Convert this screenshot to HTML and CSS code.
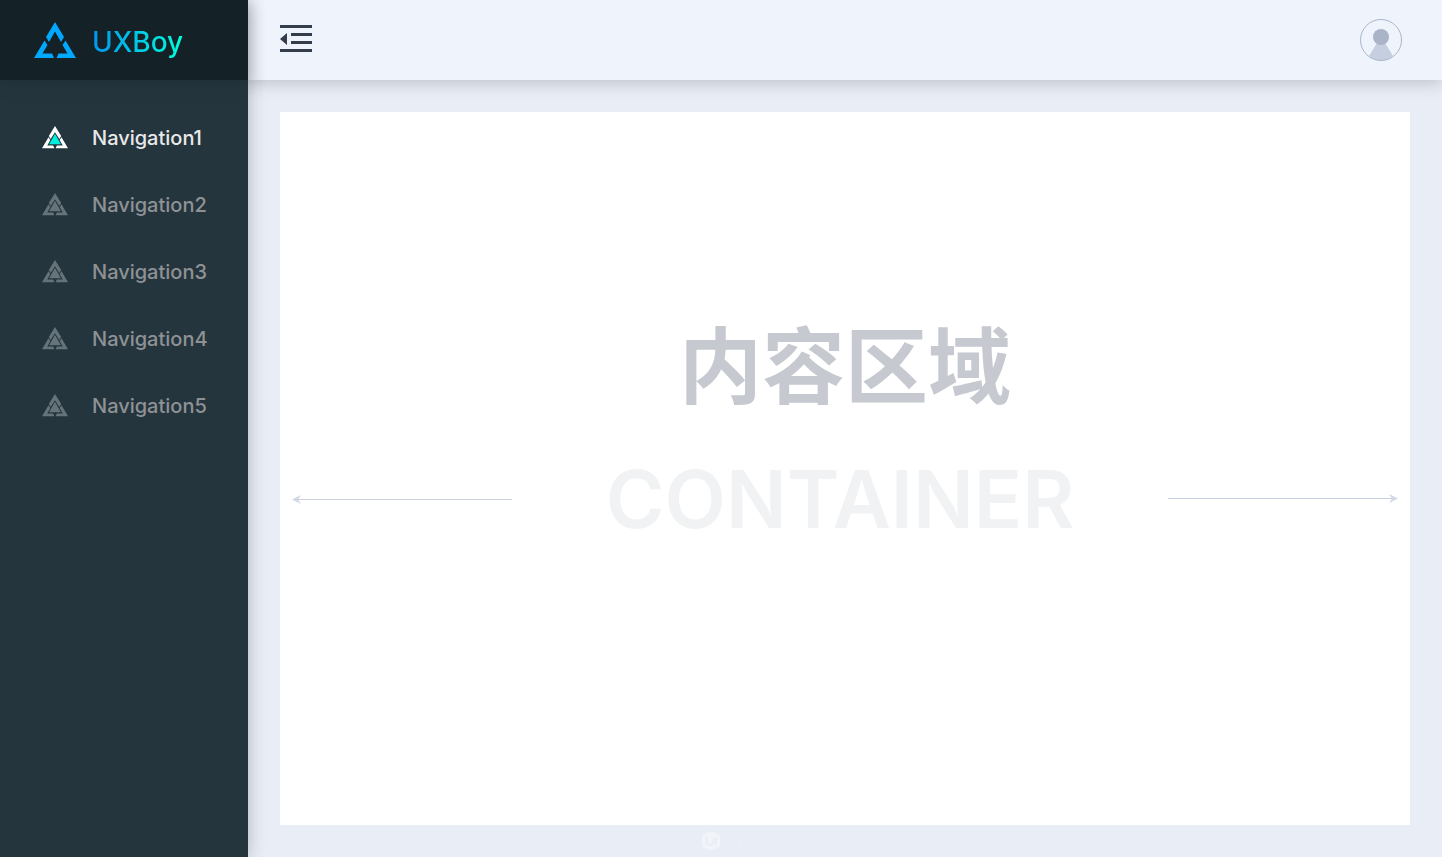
FILE: index.html
```html
<!DOCTYPE html>
<html lang="zh-CN">
<head>
    <meta charset="UTF-8">
    <meta name="viewport" content="width=device-width, initial-scale=1.0">
    <title>UXBoy</title>
    <link rel="stylesheet" href="styles.css">
</head>
<body>
    <svg class="symbols" aria-hidden="true">
        <symbol id="tri" viewBox="0 0 42 36">
            <path d="M21 0 30 15 27 20 21 9.500 15 20 12 15Z"/>
            <path d="M10.500 18.500 13.500 23 8.500 31.500H18L20 36H0Z"/>
            <path d="M31.500 18.500 28.500 23 33.500 31.500H24.500L22.500 36H42Z"/>
        </symbol>
        <symbol id="tri-nav" viewBox="0 0 42 36" preserveAspectRatio="xMidYMin meet">
            <path d="M21 0 31 16 28 21 21 10 14 21 11 16Z"/>
            <path d="M10.500 18 13.500 22.500 8.500 31.500H18L20 36H0Z"/>
            <path d="M31.500 18 28.500 22.500 33.500 31.500H24L22 36H42Z"/>
            <path class="core" d="M21 12.500 30.500 29.500H11.500Z"/>
        </symbol>
    </svg>

    <aside class="sidebar">
        <a href="#" class="brand">
            <svg class="brand-logo"><use href="#tri"/></svg>
            <span class="brand-name">UXBoy</span>
        </a>
        <nav class="nav">
            <a href="#" class="nav-item active"><svg class="nav-icon"><use href="#tri-nav"/></svg>Navigation1</a>
            <a href="#" class="nav-item"><svg class="nav-icon"><use href="#tri-nav"/></svg>Navigation2</a>
            <a href="#" class="nav-item"><svg class="nav-icon"><use href="#tri-nav"/></svg>Navigation3</a>
            <a href="#" class="nav-item"><svg class="nav-icon"><use href="#tri-nav"/></svg>Navigation4</a>
            <a href="#" class="nav-item"><svg class="nav-icon"><use href="#tri-nav"/></svg>Navigation5</a>
        </nav>
    </aside>

    <div class="page">
        <header class="topbar">
            <button type="button" class="icon-btn" aria-label="Menu">
                <svg width="32" height="32" viewBox="0 0 32 32" fill="#333d4b">
                    <path d="M0 1H32V4H0ZM11 9H32V12H11ZM11 17H32V20H11ZM0 25H32V28H0ZM7 9V21L0 15Z"/>
                </svg>
            </button>
            <button type="button" class="icon-btn" aria-label="User">
                <svg width="42" height="42" viewBox="0 0 42 42">
                    <path d="M17 24H25L33 37Q27 41.500 21 41.500T9 37Z" fill="#c6cfdf"/>
                    <circle cx="21" cy="18" r="8" fill="#a9b4c8"/>
                    <circle cx="21" cy="21" r="20.500" fill="none" stroke="#a9b7cb"/>
                </svg>
            </button>
        </header>

        <main class="content">
            <h1 class="title">内容区域</h1>
            <div class="row">
                <svg class="arrow" width="220" height="10" viewBox="0 0 220 10">
                    <path d="M6 5.500H220" stroke="#c9cfdb"/>
                    <path d="M0 5.500 9 1 6 5.500 9 10Z" fill="#d0d8e5"/>
                </svg>
                <span class="subtitle">CONTAINER</span>
                <svg class="arrow" width="230" height="10" viewBox="0 0 230 10">
                    <path d="M0 4.500H224" stroke="#c9d2e0"/>
                    <path d="M230 4.500 221 0 224 4.500 221 9Z" fill="#d0d8e5"/>
                </svg>
            </div>
        </main>

        <footer class="footer">
            <svg width="20" height="20" viewBox="0 0 20 20">
                <path d="M8 1Q10 0 12 1L18 4Q19 5 19 6V14Q19 15 18 16L12 19Q10 20 8 19L2 16Q1 15 1 14V6Q1 5 2 4Z" fill="#f1f4f8"/>
                <path d="M5.500 6.500V10.500A3.500 3.500 0 0 0 12.500 10.500V6.500M15 6.500V14" fill="none" stroke="#e9edf5" stroke-width="2"/>
            </svg>
            <span>·cn</span>
        </footer>
    </div>
</body>
</html>
```
FILE: styles.css
```css
* {
    box-sizing: border-box;
}

body {
    margin: 0;
    min-height: 100vh;
    display: flex;
    background: #e9edf5;
    font-family: Inter, "Noto Sans CJK SC", sans-serif;
}

a {
    text-decoration: none;
}

.symbols {
    position: absolute;
    width: 0;
    height: 0;
}

/* sidebar */
.sidebar {
    position: relative;
    z-index: 2;
    flex: 0 0 248px;
    background: #25353d;
    box-shadow: 0 0 16px rgba(40, 45, 60, 0.3);
}

.brand {
    display: flex;
    align-items: flex-end;
    gap: 16px;
    height: 80px;
    padding: 0 0 22px 34px;
    background: #142126;
    box-shadow: 0 4px 16px rgba(20, 33, 38, 0.25);
}

.brand-logo {
    width: 42px;
    height: 36px;
    fill: #00a8ff;
}

.brand-name {
    font-size: 28px;
    line-height: 32px;
    font-weight: 500;
    color: transparent;
    background: linear-gradient(90deg, #0096f0, #00ffdc);
    -webkit-background-clip: text;
    background-clip: text;
}

.nav {
    padding-top: 24px;
}

.nav-item {
    display: flex;
    align-items: center;
    gap: 24px;
    height: 67px;
    padding-left: 42px;
    font-size: 20px;
    font-weight: 500;
    color: #8e9295;
}

.nav-icon {
    width: 26px;
    height: 24px;
    fill: #65737a;
}

.core {
    fill: var(--core, #65737a);
}

.nav-item.active {
    color: #e9e9ea;
}

.nav-item.active .nav-icon {
    --core: #00f0e0;
    fill: #fff;
}

/* right side */
.page {
    flex: 1;
    display: flex;
    flex-direction: column;
}

.topbar {
    display: flex;
    align-items: center;
    justify-content: space-between;
    height: 80px;
    padding: 0 40px 0 32px;
    background: #eff3fb;
    box-shadow: 0 2px 16px rgba(40, 45, 60, 0.25);
}

.icon-btn {
    display: flex;
    padding: 0;
    border: 0;
    background: none;
    cursor: pointer;
}

.content {
    flex: 1;
    display: flex;
    flex-direction: column;
    justify-content: center;
    margin: 32px 32px 0;
    padding: 0 12px 60px;
    background: #fff;
}

.title {
    margin: 0;
    font-size: 83px;
    line-height: 120px;
    font-weight: 700;
    text-align: center;
    color: #c7c9d1;
}

.row {
    display: flex;
    align-items: center;
    justify-content: space-between;
}

.subtitle {
    font-size: 80px;
    line-height: 144px;
    font-weight: 600;
    color: #f1f2f4;
}

.footer {
    display: flex;
    align-items: center;
    justify-content: center;
    height: 32px;
    padding-right: 248px;
    font-size: 14px;
    color: #edf1f7;
}
```
